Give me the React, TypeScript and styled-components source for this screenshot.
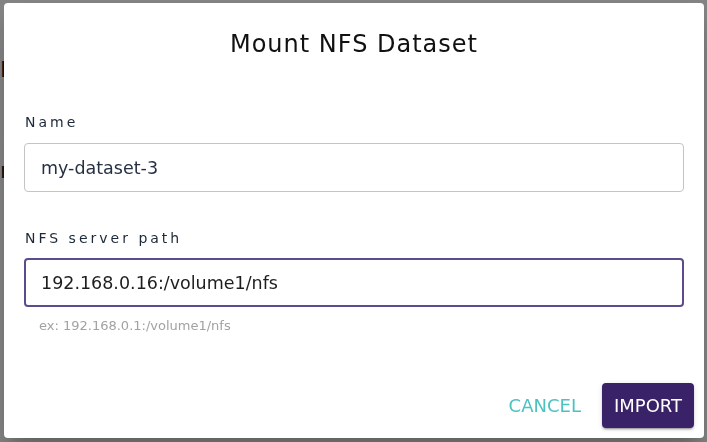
import styled, { createGlobalStyle } from "styled-components";

const GlobalStyle = createGlobalStyle`
  html, body {
    margin: 0;
    padding: 0;
    width: 707px;
    height: 442px;
    overflow: hidden;
    font-family: "DejaVu Sans", "Open Sans", sans-serif;
  }
`;

const Page = styled.div`
  width: 707px;
  height: 442px;
  background: #fafafa;
  color: #222;
`;

const PageHeader = styled.div`
  height: 139px;
  border-bottom: 1px solid #ffffff;
  display: flex;
  align-items: center;
  font-size: 22px;
`;

const PageRow = styled.div`
  height: 60px;
  display: flex;
  align-items: center;
  font-size: 22px;
`;

const Overlay = styled.div`
  position: fixed;
  inset: 0;
  background: rgba(0, 0, 0, 0.47);
  display: flex;
  align-items: flex-start;
  padding: 3px 3px 0 4px;
`;

const Dialog = styled.div`
  width: 700px;
  height: 435px;
  box-sizing: border-box;
  background: #ffffff;
  border-radius: 4px;
  box-shadow: 0 11px 15px -7px rgba(0, 0, 0, 0.2), 0 24px 38px 3px rgba(0, 0, 0, 0.14);
  display: flex;
  flex-direction: column;
`;

const Title = styled.h2`
  margin: 0;
  padding: 25px 20px 0;
  font-size: 24px;
  line-height: 32px;
  font-weight: 400;
  letter-spacing: 1px;
  text-align: center;
  color: #111111;
`;

const Body = styled.div`
  padding: 52px 20px 0;
  display: flex;
  flex-direction: column;
`;

const Field = styled.div<{ $gap?: number }>`
  display: flex;
  flex-direction: column;
  margin-top: ${(p) => p.$gap ?? 0}px;
`;

const Label = styled.label<{ $space?: number }>`
  font-size: 14px;
  line-height: 20px;
  letter-spacing: 3px;
  color: #1c2938;
  padding-left: 1px;
  margin-bottom: ${(p) => p.$space ?? 11}px;
`;

const Input = styled.input<{ $focused?: boolean }>`
  box-sizing: border-box;
  width: 660px;
  height: 49px;
  border: ${(p) => (p.$focused ? "2px solid #5d4b8c" : "1px solid #c4c4c4")};
  border-radius: 4px;
  padding: 0 ${(p) => (p.$focused ? 15 : 16)}px;
  font-family: inherit;
  font-size: 17.5px;
  color: ${(p) => (p.$focused ? "#1e1e1e" : "#263043")};
  background: #fff;
  outline: none;
`;

const Helper = styled.div`
  margin-top: 10px;
  padding-left: 15px;
  font-size: 13px;
  line-height: 18px;
  color: #a2a2a2;
`;

const Actions = styled.div`
  margin-top: auto;
  padding: 0 10px 10px;
  display: flex;
  justify-content: flex-end;
  align-items: center;
  gap: 21px;
`;

const Button = styled.button<{ $primary?: boolean }>`
  height: 45px;
  box-sizing: border-box;
  padding: 0 ${(p) => (p.$primary ? 12 : 0)}px;
  border: none;
  border-radius: 4px;
  font-family: inherit;
  font-size: 18px;
  background: ${(p) => (p.$primary ? "#3a2268" : "transparent")};
  color: ${(p) => (p.$primary ? "#ffffff" : "#4cc2c2")};
  box-shadow: ${(p) =>
    p.$primary
      ? "0 3px 1px -2px rgba(0,0,0,0.2), 0 2px 2px rgba(0,0,0,0.14), 0 1px 5px rgba(0,0,0,0.12)"
      : "none"};
  cursor: pointer;
`;

export default function App() {
  return (
    <>
      <GlobalStyle />
      <Page>
        <PageHeader>Datasets</PageHeader>
        <PageRow>n</PageRow>
      </Page>
      <Overlay>
        <Dialog>
          <Title>Mount NFS Dataset</Title>
          <Body>
            <Field>
              <Label>Name</Label>
              <Input defaultValue="my-dataset-3" />
            </Field>
            <Field $gap={36}>
              <Label $space={10}>NFS server path</Label>
              <Input $focused defaultValue="192.168.0.16:/volume1/nfs" />
              <Helper>ex: 192.168.0.1:/volume1/nfs</Helper>
            </Field>
          </Body>
          <Actions>
            <Button>CANCEL</Button>
            <Button $primary>IMPORT</Button>
          </Actions>
        </Dialog>
      </Overlay>
    </>
  );
}
